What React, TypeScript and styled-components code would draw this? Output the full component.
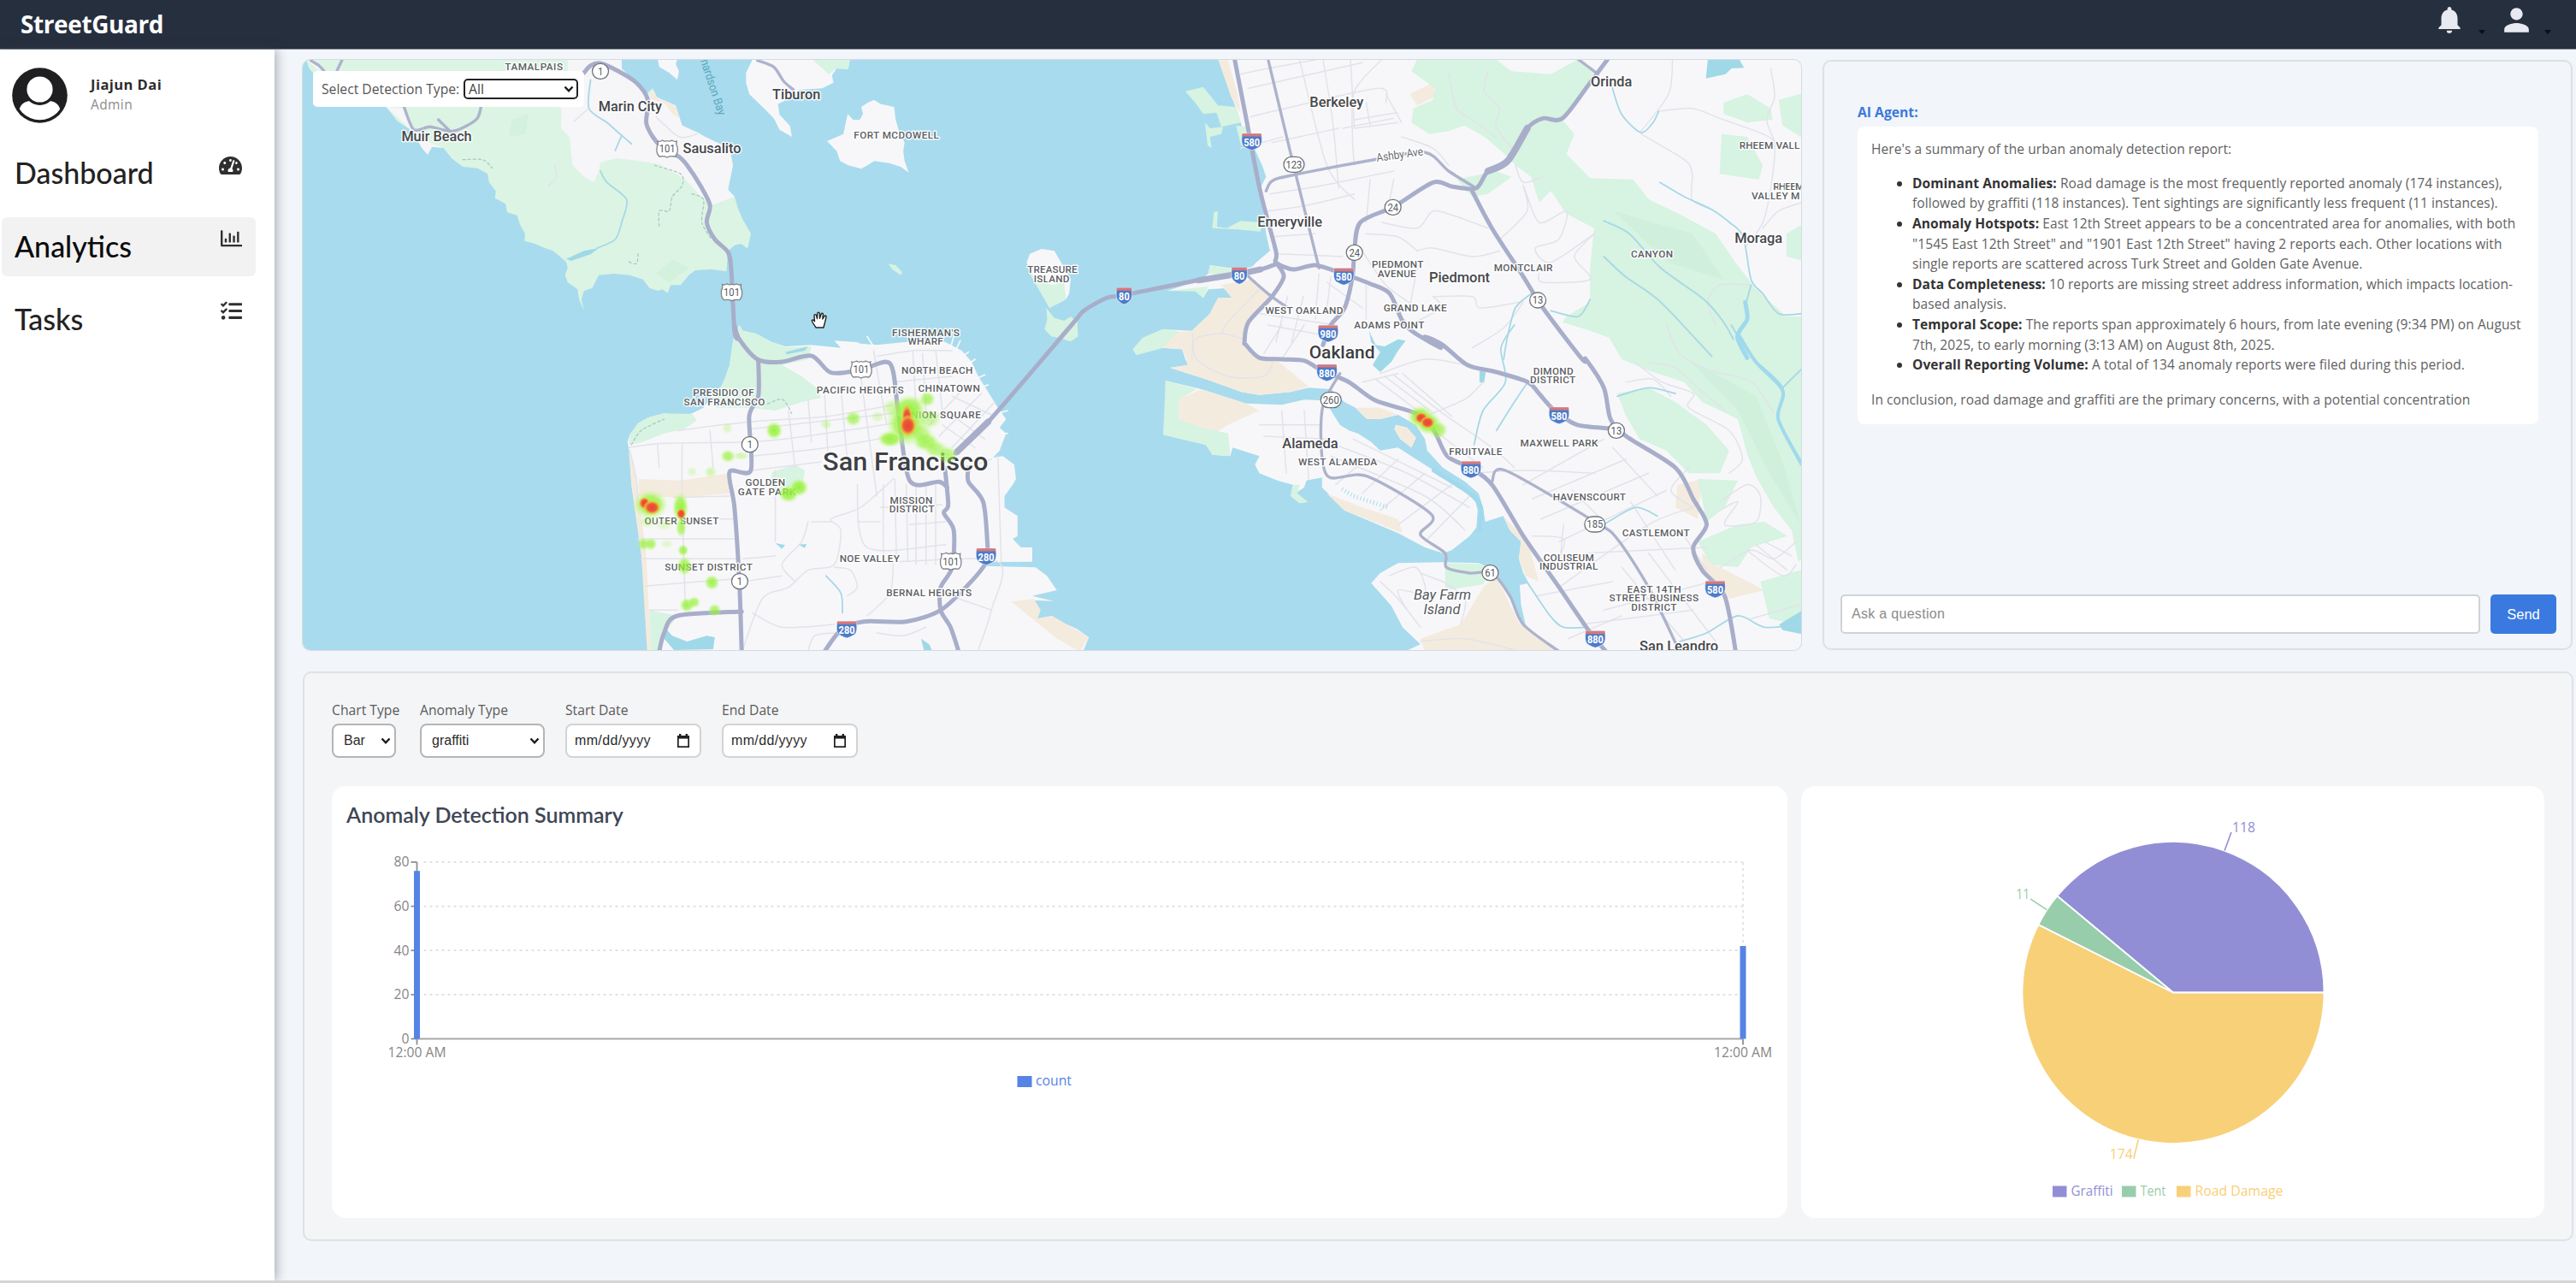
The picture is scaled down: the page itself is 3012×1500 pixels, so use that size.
import React from 'react';
import styled, { createGlobalStyle } from 'styled-components';
import { MdNotifications, MdPerson } from 'react-icons/md';
import { FaTachometerAlt, FaRegChartBar, FaTasks } from 'react-icons/fa';

const UI = `'Open Sans', 'Noto Sans', sans-serif`;

const GlobalStyle = createGlobalStyle`
  * { box-sizing: border-box; }
  body { margin: 0; background: #f2f5f9; font-family: ${UI}; color: #333; }
`;

/* ---------- shell ---------- */

const Page = styled.div`
  width: 3012px;
  height: 1500px;
  display: flex;
  flex-direction: column;
  overflow: hidden;
  border-bottom: 3px solid #d3d5d7;
`;

const Header = styled.header`
  height: 58px;
  flex: none;
  display: flex;
  align-items: flex-start;
  justify-content: space-between;
  padding: 0 29px 0 24px;
  background: #262f3e;
  border-bottom: 1px solid #8b9098;
`;

const Brand = styled.h1`
  margin: 9px 0 0;
  font-size: 28px;
  line-height: 38px;
  font-weight: 700;
  letter-spacing: -0.4px;
  color: #fff;
`;

const HeaderActions = styled.div`
  display: flex;
  align-items: flex-start;
  color: #e9e9f2;
`;

const Caret = styled.span<{ $before: number; $after: number }>`
  width: 0;
  height: 0;
  margin: 35px ${p => p.$after}px 0 ${p => p.$before}px;
  border: 4px solid transparent;
  border-top: 5px solid #0b0e14;
  border-bottom: 0;
`;

const IconBox = styled.span<{ $w: number; $h: number; $top: number }>`
  width: ${p => p.$w}px;
  height: ${p => p.$h}px;
  margin-top: ${p => p.$top}px;
  display: flex;
  align-items: center;
  justify-content: center;
  svg { flex: none; }
`;

const Body = styled.div`
  flex: 1;
  min-height: 0;
  display: flex;
`;

const Sidebar = styled.aside`
  width: 321px;
  flex: none;
  background: #fff;
  box-shadow: 2px 0 12px rgba(60, 64, 80, 0.42);
`;

const Profile = styled.div`
  display: flex;
  align-items: center;
  height: 66px;
  margin-top: 20px;
  padding-left: 14px;
  gap: 27px;
`;

const ProfileText = styled.div`
  display: flex;
  flex-direction: column;
  margin-top: -3px;
`;

const ProfileName = styled.span`
  font-size: 16.5px;
  line-height: 24px;
  font-weight: 700;
  letter-spacing: 0.45px;
  color: #2c2c2c;
`;

const ProfileRole = styled.span`
  font-size: 15.5px;
  line-height: 22px;
  letter-spacing: 0.4px;
  color: #8d8d8d;
`;

const Nav = styled.nav`
  display: flex;
  flex-direction: column;
  gap: 16.5px;
  margin: 24px 22px 0 2px;
`;

const NavItem = styled.a<{ $active?: boolean }>`
  height: 69px;
  display: flex;
  justify-content: space-between;
  padding: 10px 16px 0 15px;
  border-radius: 6px;
  background: ${p => (p.$active ? '#f2f2f2' : 'transparent')};
  color: ${p => (p.$active ? '#0c0c0c' : '#222')};
  font-family: Lato, sans-serif;
  font-size: 34px;
  font-weight: 500;
  line-height: 48px;
  svg { margin-top: 2px; color: #2f2f2f; }
`;

const Main = styled.main`
  flex: 1;
  display: flex;
  flex-direction: column;
  gap: 25px;
  padding: 12px 3px 0 33px;
`;

const TopRow = styled.div`
  height: 690px;
  display: flex;
  gap: 25px;
`;

/* ---------- map ---------- */

const MapCard = styled.section`
  position: relative;
  width: 1752px;
  height: 690px;
  border-radius: 9px;
  overflow: hidden;
  box-shadow: 0 0 0 1px #d5dbe0;
  svg.map { display: block; }
`;

const MapFilter = styled.div`
  position: absolute;
  left: 12px;
  top: 13px;
  width: 317px;
  height: 42px;
  display: flex;
  align-items: center;
  gap: 5px;
  padding-left: 10px;
  background: #fff;
  border-radius: 5px;
  font-size: 15.7px;
  white-space: nowrap;
  color: #555;
`;

const FilterLabel = styled.span`
  width: 161px;
`;

const FilterSelect = styled.div`
  width: 134px;
  height: 24px;
  display: flex;
  align-items: center;
  justify-content: space-between;
  padding: 0 3px 0 4px;
  border: 2px solid #222;
  border-radius: 5px;
  background: #fff;
  color: #444;
`;

/* ---------- assistant ---------- */

const AgentCard = styled.section`
  width: 877px;
  height: 690px;
  display: flex;
  flex-direction: column;
  padding: 45px 17px 17px 19px;
  border: 2px solid #dce1e5;
  border-radius: 10px;
`;

const AgentName = styled.div`
  margin-left: 20px;
  height: 30px;
  font-size: 15.7px;
  line-height: 28px;
  font-weight: 700;
  color: #3b78dc;
`;

const Bubble = styled.div`
  width: 796px;
  height: 348px;
  margin: 1px 0 0 20px;
  padding: 15px 16px;
  background: #fff;
  border-radius: 8px;
  font-size: 15.5px;
  line-height: 23.62px;
  letter-spacing: 0.08px;
  white-space: nowrap;
  color: #626262;
  strong { color: #333; font-weight: 700; }
`;

const Findings = styled.ul`
  margin: 16px 0 17px;
  padding-left: 48px;
  li::marker { color: #333; }
`;

const Paragraph = styled.p`
  margin: 0;
`;

const AskRow = styled.div`
  display: flex;
  gap: 12px;
  margin-top: auto;
`;

const AskInput = styled.input`
  width: 749px;
  height: 46px;
  padding: 0 11px;
  border: 2px solid #cfd3d8;
  border-radius: 5px;
  background: #fff;
  font-family: 'Liberation Sans', Arial, sans-serif;
  font-size: 16px;
  letter-spacing: 0.3px;
  &::placeholder { color: #8c8c8c; opacity: 1; }
`;

const SendButton = styled.button`
  width: 77px;
  height: 46px;
  padding: 0;
  border: 0;
  border-radius: 5px;
  background: #3a7ae0;
  color: #fff;
  font-family: 'Liberation Sans', Arial, sans-serif;
  font-size: 16.5px;
`;

/* ---------- analytics ---------- */

const Analytics = styled.section`
  width: 2655px;
  height: 666px;
  padding: 30px 32px 25px;
  display: flex;
  flex-direction: column;
  border: 2px solid #dee1e5;
  border-radius: 10px;
  background: #f4f5f7;
`;

const Controls = styled.div`
  display: flex;
  height: 69px;
`;

const Field = styled.div<{ $w: number }>`
  width: ${p => p.$w}px;
  display: flex;
  flex-direction: column;
  gap: 3px;
`;

const FieldLabel = styled.label`
  font-size: 15.7px;
  line-height: 26px;
  white-space: nowrap;
  color: #5a5a5a;
`;

const Control = styled.div<{ $w: number; $date?: boolean }>`
  width: ${p => p.$w}px;
  height: 41px;
  display: flex;
  align-items: center;
  justify-content: space-between;
  padding: ${p => (p.$date ? '0 12px 0 9px' : '0 4px 0 12px')};
  border: 2px solid ${p => (p.$date ? '#d3d3d3' : '#b5b5b5')};
  border-radius: 8px;
  background: #fff;
  font-family: 'Liberation Sans', Arial, sans-serif;
  font-size: 16px;
  letter-spacing: ${p => (p.$date ? '0.35px' : '0')};
  color: #2b2b2b;
`;

const Charts = styled.div`
  display: flex;
  gap: 16px;
  margin-top: 33px;
`;

const ChartCard = styled.div<{ $w: number }>`
  width: ${p => p.$w}px;
  height: 505px;
  background: #fff;
  border-radius: 16px;
`;

const ChartTitle = styled.h2`
  margin: 0;
  height: 60px;
  padding: 15px 0 0 17px;
  font-family: Lato, sans-serif;
  font-size: 25px;
  line-height: 36px;
  font-weight: 600;
  color: #3e4654;
`;

/* ---------- small drawings ---------- */

const Chevron = ({ size = 12 }: { size?: number }) => (
  <svg width={size} height={size} viewBox="0 0 12 12" fill="none" stroke="#1c1c1c" strokeWidth="2.4">
    <path d="M1.5 3.5 6 8.3l4.5-4.8" />
  </svg>
);

const CalendarGlyph = () => (
  <svg width="14" height="16" viewBox="0 0 14 16">
    <path d="M0 2h2V0h2.4v2h5.2V0H12v2h2v14H0z" fill="#1f1f1f" />
    <path d="M1.7 5.6h10.6v8.7H1.7z" fill="#fff" />
  </svg>
);

const Avatar = () => (
  <svg width="65" height="65" viewBox="0 0 65 65">
    <defs><clipPath id="face"><circle cx="32.5" cy="32.5" r="28.8" /></clipPath></defs>
    <circle cx="32.5" cy="32.5" r="32.3" fill="#1f1f21" />
    <path clipPath="url(#face)" d="M8 62V52C9 44 14 39 22 39c6 5 15 5 21 0 8 0 13 5 14 13v10z" fill="#fff" />
    <circle cx="32.5" cy="25.5" r="16.8" fill="#fff" stroke="#1f1f21" strokeWidth="3.4" />
  </svg>
);

/* ---------- map data ---------- */

/* Survey sheets: origin and units per pixel of each sheet in page space. */
type Sheet = { x: number; y: number; kx: number };
const sheets: Record<string, Sheet> = {
  A: { x: 350, y: 60, kx: 600 / 1568 },
  B: { x: 900, y: 60, kx: 600 / 1568 },
  C: { x: 1400, y: 60, kx: 720 / 1568 },
  D: { x: 700, y: 380, kx: 600 / 1568 },
  E: { x: 1300, y: 380, kx: 820 / 1568 },
};

const place = (s: string, x: number, y: number): [number, number] => [
  sheets[s].x + x * sheets[s].kx,
  sheets[s].y + y / 3,
];

const points = (src: string): [number, number][] => {
  let sheet = 'A';
  const out: [number, number][] = [];
  src.trim().split(/\s+/).forEach(t => {
    if (sheets[t]) sheet = t;
    else {
      const [x, y] = t.split(',').map(Number);
      out.push(place(sheet, x, y));
    }
  });
  return out;
};

const line = (src: string) =>
  points(src).map(([x, y], i) => `${i ? 'L' : 'M'}${x.toFixed(1)} ${y.toFixed(1)}`).join('');
const area = (src: string) => line(src) + 'Z';

const smooth = (src: string) => {
  const p = points(src);
  let d = `M${p[0][0].toFixed(1)} ${p[0][1].toFixed(1)}`;
  for (let i = 0; i < p.length - 1; i++) {
    const a = p[Math.max(i - 1, 0)], b = p[i], c = p[i + 1], e = p[Math.min(i + 2, p.length - 1)];
    const k = 7;
    d += `C${(b[0] + (c[0] - a[0]) / k).toFixed(1)} ${(b[1] + (c[1] - a[1]) / k).toFixed(1)} ${(c[0] - (e[0] - b[0]) / k).toFixed(1)} ${(c[1] - (e[1] - b[1]) / k).toFixed(1)} ${c[0].toFixed(1)} ${c[1].toFixed(1)}`;
  }
  return d;
};

const marin =
  'A 20,28 30,60 60,100 265,195 300,245 345,280 375,340 392,362 405,335 440,338 465,375 500,405 545,410 575,430 580,460 600,490 598,515 630,535 635,565 665,575 675,610 690,640 688,665 720,675 750,690 775,700 815,738 820,760 812,785 820,810 850,835 855,870 870,910 862,870 870,840 895,830 915,785 960,780 1010,785 1050,800 1070,830 1095,840 1110,835 1125,848 1135,820 1165,820 1190,785 1210,768 1260,765 1305,772 1310,700 1330,680 1350,675 1370,692 1380,640 1355,590 1340,550 1330,510 1310,485 1315,440 1325,400 1315,340 1290,330 1240,300 1220,285 1200,275 1170,260 1155,230 1150,190 1110,170 1090,160 1080,130 1060,150 1020,100 985,60 985,28';

const land = [
  'A 1095,28 1100,55 1130,75 1155,100 1160,70 1150,45 1155,28',
  'A 1385,28 1365,75 1365,110 1375,150 1420,200 1450,235 B 30,275 68,300 62,262 30,222 25,185 60,165 90,135 160,130 195,110 190,85 205,60 240,62 245,28',
  'B 175,315 225,290 238,220 255,240 275,240 285,220 280,195 300,180 318,170 340,185 380,195 385,240 395,280 412,320 408,350 412,385 425,425 400,405 365,392 320,385 280,412 240,400 215,385 205,350',
  'B 785,740 795,710 830,693 870,700 885,730 900,760 920,800 915,850 905,870 855,900 830,850 800,790',
  'D 415,30 410,60 400,140 385,190 370,225 345,250 320,290 285,310 250,318 200,310 150,325 120,345 95,385 88,410 95,450 100,560 110,640 120,720 130,800 140,900 148,1000 155,1145 1480,1145 1498,1095 1460,1065 1420,1045 1385,1020 1340,1030 1350,1000 1320,965 1390,968 1325,950 1400,930 1370,880 1335,850 1180,845 1180,832 1325,830 1325,780 1290,780 1265,750 1280,740 1280,670 1240,640 1240,600 1265,560 1275,540 1270,490 1235,460 1205,465 1225,440 1245,380 1225,360 1245,330 1220,290 1190,235 1160,180 1140,130 1110,90 1060,60 1020,50 850,70 800,65 790,60 720,55 740,80 650,70 570,75 530,60 480,30 440,20 430,0',
  'B 1370,28 1395,80 1405,140 1425,200 1445,270 C 145,340 165,400 175,440 160,480 165,540 172,600 175,640 185,700 150,740 140,755 B 1440,765 1345,750 1340,780 1310,805 1215,840 1300,840 1325,865 1340,835 1400,830 1412,845 1412,865 1370,865 1345,920 1290,980 1200,975 1140,1005 1110,1045 1120,1065 1200,1040 1260,1045 1270,1080 E 170,140 130,150 210,190 290,235 330,245 400,235 440,220 490,225 520,270 545,290 570,330 600,330 640,315 680,350 700,400 705,440 740,500 790,550 820,590 830,640 835,690 875,670 890,720 915,760 910,820 920,870 932,905 912,912 915,980 925,1050 915,1045 905,1000 880,920 850,855 820,835 740,832 640,835 600,870 580,905 625,985 650,1060 690,1120 655,1145 1560,1145 1560,0 C 1560,28',
  'E 120,195 200,225 300,275 380,280 430,262 480,265 490,300 510,350 530,370 550,380 580,410 600,440 640,430 680,470 720,510 770,560 810,600 818,650 815,710 800,740 760,790 740,800 700,780 640,730 580,690 520,650 490,600 470,570 470,535 435,545 430,570 410,590 438,620 420,625 400,600 405,560 370,545 330,520 320,490 330,460 270,430 265,460 225,455 210,420 115,385 120,300',
  'E 635,350 660,360 680,395 670,430 645,400 632,365',
];

const parks = [
  'B 130,28 245,28 240,62 205,60 180,80',
  'B 362,745 385,750 405,775 400,785 375,765',
  'B 795,780 860,820 900,810 905,870 855,900 830,850',
  'B 845,900 870,935 900,945 920,930 940,950 942,1000 920,1018 885,1005 860,1000 840,975 848,940',
  'B 1270,140 1325,125 1370,190 1425,195 1440,250 1380,265 1365,215 1325,220 1300,180',
  'B 1330,250 1345,270 1385,265 1380,290 1345,300 1350,340 1338,330',
  'B 1425,260 1455,265 1470,320 1440,330',
  'C 38,620 42,565 52,560 50,615 75,620 110,595 170,600 160,632 100,625',
  'B 1345,750 1420,765 1400,790 1340,780',
  'B 1215,840 1340,825 1325,865 1300,842',
  'B 1110,1045 1140,1005 1200,975 1250,982 1200,1040 1120,1065',
  'D 415,30 410,60 400,140 385,190 370,225 345,250 360,290 460,290 540,300 620,270 680,255 665,220 620,180 590,160 560,140 640,120 650,75 570,78 530,60 480,30 440,20 430,0',
  'D 95,385 120,345 150,325 200,310 285,312 300,335 260,365 200,380 130,412 92,420',
  'D 520,575 530,515 600,490 630,510 622,570 560,590',
  'D 155,1000 240,1020 210,1070 185,1145 160,1145',
  'C 560,28 640,28 760,28 800,70 900,80 970,28 1010,60 1000,120 930,240 960,290 940,360 1000,445 1110,450 1150,520 1240,580 1320,640 1370,740 1420,830 1500,930 1560,930 1560,1145 E 1560,800 1535,830 1520,720 1480,640 1440,530 1420,450 1400,330 1320,270 1280,200 1200,160 1140,120 1110,40 C 1060,1010 1000,980 930,950 940,930 1000,880 1000,760 1010,620 940,570 900,490 870,530 850,440 810,400 790,370 740,310 720,290 680,260 640,280 590,290 545,250 550,200 600,170 605,130 545,70',
  'C 660,450 760,420 800,440 740,500 700,510',
  'C 1340,180 1400,150 1460,200 1465,240 1400,250 1340,220',
  'C 1335,290 1400,300 1440,400 1430,450 1330,430',
  'C 1480,170 1560,140 1560,320 1490,260',
  'C 1500,640 1560,590 1560,740 1500,720',
  'E 1130,240 1200,220 1260,270 1330,350 1380,440 1360,520 1290,520 1240,440 1180,400 1150,320',
  'E 1310,540 1400,545 1370,640 1330,690',
  'E 1310,760 1400,700 1460,690 1510,740 1430,780 1400,850 1340,840',
  'E 1450,900 1560,850 1560,1060 1470,1030',
  'E 120,195 190,225 150,260 150,330 200,360 260,380 265,460 225,455 210,420 115,385',
  'E 745,835 820,838 850,855 830,910 745,930',
  'E 405,560 420,560 415,590 438,620 420,625 400,600',
];

const sandy = [
  'D 92,440 105,470 122,600 145,800 160,1140 148,1140 130,800 100,560',
  'D 122,540 250,545 400,520 408,590 250,605 122,600',
  'B 1370,28 1400,28 1430,150 1440,220 1410,160',
  'B 1412,865 1370,865 1345,920 1290,980 1240,985 1200,1040 1260,1045 1275,1080 E 165,110 170,140 130,150 210,190 290,235 330,245 400,235 440,215 370,125 320,110 295,60 C 120,1020 130,950 190,860 140,800 60,820',
  'E 150,260 200,225 300,275 330,300 260,350 230,380 150,330',
  'E 860,880 910,1045 1000,1145 700,1145 690,1100 780,1050 830,920',
  'E 1265,560 1320,540 1310,680 1260,640',
  'E 1320,800 1360,850 1460,930 1380,960 1320,860',
  'E 875,670 890,720 915,760 910,820 925,880 955,900 930,760',
  'E 635,350 660,360 680,395 670,430 645,400 632,365',
  'E 545,290 570,330 600,330 640,315 600,290',
  'D 1260,970 1330,960 1350,1000 1340,1030 1385,1020 1498,1095 1470,1145 1400,1100',
  'E 480,590 560,640 640,680 650,730 520,650',
  'C 540,150 600,110 605,160 560,190',
  'A 1080,130 1095,165 1150,190 1160,235 1140,220 1120,185 1070,165',
];

const developed = [
  'A 800,200 800,270 825,300 835,400 870,440 900,460 915,420 920,390 970,375 1040,385 1100,395 1180,450 1220,500 1260,540 1330,510 1310,485 1325,400 1315,340 1240,300 1170,260 1150,190 1090,160 1060,150 985,60 985,28 820,28 820,120 790,195',
  'A 265,195 320,200 350,275 400,320 440,338 405,335 392,362 375,340 345,280',
  'A 60,68 20,28 45,28 80,68',
];

const ponds = [
  'D 205,1065 225,1090 270,1110 330,1090 355,1095 350,1137 230,1140 200,1100',
  'D 985,1100 1010,1120 1020,1145 995,1145',
  'D 540,765 570,772 560,785',
  'D 610,770 635,768 630,782',
  'E 575,20 580,60 600,95 583,140 600,165 625,130 640,90 657,55 640,50 610,75 590,70',
  'E 822,160 836,165 832,205 822,200',
  'C 1300,28 1380,28 1392,58 1360,60 1345,80 1295,95',
  'E 1492,1050 1545,1000 1545,1085 1500,1070',
  'D 570,95 640,75 630,90 575,103',
  'A 815,728 870,700 915,690 890,712 830,735',
];

const creeks = [
  'A 890,100 885,200 940,250 985,295 1015,325',
  'A 985,295 965,348',
  'A 920,420 940,460 1000,520 985,600 965,660 910,690',
  'C 1055,120 1080,220 1130,285 1160,250 1175,210',
  'C 1178,460 1240,510 1310,555 1355,600 1390,650 1410,800 1440,850 1480,920 1540,920',
  'C 1035,595 1100,640 1180,760 1290,870 1340,950 1365,1010',
  'C 1035,720 1090,790 1180,880 1310,1070',
  'C 1410,820 1395,900 1400,940 1375,1010 1400,1075',
  'C 850,850 810,900 790,1000 780,1080',
  'C 900,910 970,930 1000,870',
  'E 1385,0 1430,110 1500,220 1490,330 1540,490',
  'E 1500,220 1545,150',
  'E 900,0 870,80 880,200 830,300 810,420',
  'E 930,200 900,270 860,370',
  'E 720,510 800,590 825,640 822,700',
  'E 1130,250 1200,220 1260,240',
  'E 930,905 980,1020 1010,1060 1060,1060',
  'E 1270,1110 1330,1080 1400,1020 1460,1060 1545,1050',
  'E 1100,700 1170,640 1220,670',
  'D 695,880 740,940 745,1010',
];

const highways = [
  'D 415,0 430,50 485,120 555,130 650,108 710,167 800,158 890,135 915,300 950,545 1040,550 1065,570',
  'D 488,125 488,250 460,320 465,510 400,515 415,640 430,900 437,1145',
  'D 437,1005 240,1020 200,1080 185,1145',
  'D 1058,500 1068,630 1055,660 1085,720 1080,850 1045,920 1045,1000 1075,1060 1100,1145',
  'D 690,1145 740,1070 810,1040 940,1040 1045,1000 1130,910 1185,830 1188,770 1175,620 1130,550 1130,500',
  'D 1090,450 1190,340 1445,0 B 960,910 1030,865 1083,855 1320,800 1435,780 1500,765 1550,745',
  'C 95,28 125,240 160,490 200,700 200,740 245,765 300,750 370,780 440,815 490,850 520,940 550,985 620,1040 E 700,40 740,70 795,140 860,165 930,200 955,240 990,300 1040,350 1110,362',
  'C 200,740 220,790 190,860 130,950 120,1020 E 300,70 330,115 380,120 430,125 470,160 530,200 590,265 680,310 720,370 750,460 800,500 850,560 920,740 1000,920 1070,1080 1105,1145',
  'C 700,490 750,620 830,790 880,900 980,1080 E 1060,120 1100,220 1115,330 1150,390 1260,500 1300,610 1330,700 1300,780 1320,860 1370,950 1395,1145',
  'C 320,1030 340,960 375,900 395,790 400,700 415,600 500,545 600,460 650,475 710,480 740,420 790,385 840,270 880,235 930,235 1000,110 1045,28',
  'A 870,75 890,50 920,42 975,70 1030,110 1065,170 1060,250 1080,300 1115,345 1160,370 1185,400 1225,470 1255,540 1245,600 1270,660 1310,705 1320,770 1330,985 D 430,50',
];

const arterials = [
  'C 175,490 190,455 240,435 450,380 580,355 640,420 710,480',
  'C 180,28 245,400 310,760',
  'C 970,28 1020,80',
  'C 130,790 180,850 230,900',
  'E 510,170 470,300 480,525 570,530 715,665 690,735 745,800 748,850 800,870 850,870 890,950 920,1050 1000,1145',
  'E 850,550 880,510 1080,690 1130,750 1200,920 1265,1130',
  'A 320,195 350,275 400,265 470,280 540,240 555,195',
  'A 425,240 460,280',
  'A 35,32 60,50 75,68',
  'A 130,32 115,68',
  'A 1400,32 1450,55 1480,105 1510,135',
];

const streets = [
  'D 92,430 200,415 460,410 600,395 900,345',
  'D 95,440 115,540 120,620',
  'D 230,605 400,600',
  'D 250,680 410,680', 'D 120,750 415,750', 'D 130,820 430,820', 'D 145,915 420,890', 'D 155,1000 240,1000',
  'D 255,420 255,600 265,1000', 'D 180,420 185,500', 'D 340,370 350,500',
  'D 240,370 460,340 700,320 900,280', 'D 460,365 900,310', 'D 470,460 700,430 900,390', 'D 470,510 680,480',
  'D 690,230 700,440', 'D 740,220 760,480', 'D 800,170 850,600', 'D 840,90 880,350', 'D 640,260 650,410',
  'D 580,300 600,500', 'D 540,510 540,760',
  'D 850,110 960,90 1080,90', 'D 900,200 1080,180', 'D 990,100 1000,300', 'D 1030,90 1050,300', 'D 960,90 970,300',
  'D 1080,250 1210,320', 'D 1060,300 1180,400', 'D 1050,350 1150,430', 'D 1210,270 1080,430', 'D 1170,240 1040,390', 'D 1110,230 1010,350',
  'D 870,560 870,790 880,830', 'D 905,540 910,830', 'D 940,560 945,830', 'D 970,560 970,840', 'D 1000,560 1000,840', 'D 1030,560 1030,840',
  'D 790,560 820,780 1060,770', 'D 900,540 800,640 710,680 740,720 720,840 640,860 580,920 500,960 440,1140',
  'D 720,850 770,860 790,920 760,950', 'D 640,690 620,760 560,840 600,900', 'D 650,690 710,690',
  'D 920,830 1220,830 1200,1000 1160,1140', 'D 900,830 890,940 820,1020', 'D 470,1010 560,1060 720,1050',
  'D 1100,960 1200,1000', 'D 1220,460 1230,830', 'D 1130,500 1200,470', 'D 950,700 1060,690', 'D 860,640 1050,630', 'D 790,690 860,690',
  'D 850,1080 930,1090 1000,1060', 'D 640,1140 660,1090 720,1080', 'D 440,820 540,810', 'D 440,900 560,880',
  'C 260,28 330,400 400,520', 'C 320,28 345,250 360,480', 'C 390,28 400,270', 'C 470,28 400,140 395,300 400,400',
  'C 110,80 180,60 300,30', 'C 130,130 420,40', 'C 135,230 210,205 460,130 480,180', 'C 370,270 500,235', 'C 400,240 510,215',
  'C 400,270 510,250', 'C 430,180 440,260', 'C 480,150 520,250', 'C 190,320 360,270', 'C 250,430 420,390',
  'C 185,500 320,470 500,420', 'C 180,560 280,540 400,500', 'C 190,650 300,640', 'C 200,710 370,720', 'C 440,450 430,600',
  'C 430,640 510,650 560,700', 'C 470,600 560,620 600,560 660,580 740,620', 'C 560,700 600,690 700,720 770,700',
  'C 420,700 480,820 560,900', 'C 600,860 700,860 720,900 820,880', 'C 540,960 620,900 600,860', 'C 700,1040 780,970 830,880',
  'C 230,860 200,1020', 'C 270,860 240,1020', 'C 310,780 300,940', 'C 340,790 330,900', 'C 180,960 340,1000', 'C 160,920 350,960',
  'C 330,810 420,900', 'C 430,820 430,940', 'C 560,760 540,900', 'C 770,660 840,560 830,470 870,600 940,560 920,660 860,690 900,740 1010,640',
  'C 1010,640 960,720 1000,800 880,810 870,780', 'C 1210,28 1200,150 1130,280', 'C 1180,210 1260,200 1340,240 1440,290 1470,330 1460,480 1440,600 1400,680',
  'C 1460,60 1470,160 1450,240 1475,330', 'C 1130,290 1240,380 1260,430 1260,520 1310,555', 'C 1540,530 1480,560 1440,620',
  'C 1410,820 1330,820 1300,880 1320,960', 'C 740,70 730,140 770,200 760,260 800,340', 'C 640,80 660,200 700,240 760,300',
  'C 500,450 490,520', 'C 520,300 600,340 640,400', 'C 810,400 830,460 880,440', 'B 1440,340 1568,300', 'B 1380,990 1400,950 1500,830',
  'B 1290,1080 1300,1010 1380,990 1450,1010',
  'E 590,190 700,320', 'E 610,180 720,310', 'E 630,175 740,310', 'E 650,170 760,320', 'E 600,170 700,120 790,140', 'E 560,200 640,170',
  'E 700,320 790,260 830,200', 'E 740,310 850,430 900,500', 'E 730,380 830,500', 'E 800,520 930,510 1080,520', 'E 920,560 1100,400',
  'E 940,610 1150,470', 'E 960,680 1200,520', 'E 1000,760 1240,580', 'E 1000,920 1200,700 1300,640', 'E 1010,700 1000,860', 'E 940,740 1010,750 1000,820',
  'E 1030,580 1100,690', 'E 1120,430 1220,600', 'E 1160,620 1260,860', 'E 1060,800 1330,780', 'E 1100,1000 1340,900', 'E 1050,1050 1300,1000',
  'E 1140,850 1280,1110', 'E 1200,800 1350,1110', 'E 950,950 1120,900', 'E 1020,1100 1140,1020', 'E 1280,740 1330,860',
  'E 330,350 470,350', 'E 340,390 480,400', 'E 380,300 390,520', 'E 430,300 440,540', 'E 490,460 700,600 790,720', 'E 500,420 660,520 800,640',
  'E 540,400 760,570', 'E 600,650 700,520', 'E 640,700 760,560', 'E 700,760 800,600', 'E 560,590 640,470', 'E 500,560 560,480',
  'E 620,880 680,850 700,940 640,930 660,1000', 'E 600,900 640,960 690,1060', 'E 690,870 740,900', 'E 690,1110 790,1100 900,1140',
  'E 740,900 790,960 780,1050', 'E 180,30 190,120 260,180 340,180 360,130', 'E 380,0 340,100', 'E 430,0 380,120',
  'E 1170,130 1230,200 1300,240 1290,290 1380,370 1410,470 1380,520', 'E 1200,130 1260,150 1310,220 1370,300', 'E 1150,200 1210,190 1250,250',
  'E 1360,620 1420,560 1450,600 1440,690 1370,700 1400,620 1360,650', 'E 1360,850 1430,790 1480,820 1530,760', 'E 1420,790 1500,880 1530,840',
  'E 1440,770 1510,860', 'E 1460,760 1520,810', 'E 1290,500 1250,580 1300,640', 'E 1240,0 1270,100 1340,160 1430,200 1480,310', 'E 1430,1030 1540,980',
  'A 1090,230 1160,300 1215,290', 'A 780,400 785,440 760,475', 'A 880,205 840,245',
];

const trails = [
  'A 1085,400 1165,430 1170,470 1140,510 1130,560 1100,560 1100,620',
  'A 1200,500 1235,520 1230,600 1260,660',
  'A 500,380 560,380 590,410', 'A 1035,710 1030,745 1000,735',
  'D 490,230 500,280 560,260 590,310', 'D 100,420 130,370 200,330',
];

type Label = [string, number, number, number, string, ('town' | 'hood' | 'city' | 'metro' | 'isle')?];
const labels: Label[] = [
  ['A', 628, 805, 67, 'TAMALPAIS'],
  ['A', 312, 527, 314, 'Muir Beach', 'town'],
  ['A', 914, 1108, 211, 'Marin City', 'town'],
  ['A', 1172, 1350, 357, 'Sausalito', 'town'],
  ['B', 8, 155, 169, 'Tiburon', 'town'],
  ['B', 257, 517, 306, 'FORT MCDOWELL'],
  ['B', 787, 940, 777, 'TREASURE'],
  ['B', 807, 916, 809, 'ISLAND'],
  ['B', 374, 580, 998, "FISHERMAN'S"],
  ['B', 422, 530, 1029, 'WHARF'],
  ['C', 286, 423, 195, 'Berkeley', 'town'],
  ['C', 1002, 1107, 123, 'Orinda', 'town'],
  ['C', 153, 318, 614, 'Emeryville', 'town'],
  ['C', 590, 745, 811, 'Piedmont', 'town'],
  ['C', 1368, 1490, 673, 'Moraga', 'town'],
  ['C', 1380, 1534, 341, 'RHEEM VALL'],
  ['C', 1466, 1545, 486, 'RHEEM'],
  ['C', 1411, 1534, 519, 'VALLEY M'],
  ['C', 1104, 1211, 724, 'CANYON'],
  ['C', 755, 905, 770, 'MONTCLAIR'],
  ['C', 444, 576, 760, 'PIEDMONT'],
  ['C', 459, 557, 791, 'AVENUE'],
  ['C', 173, 371, 922, 'WEST OAKLAND'],
  ['C', 474, 635, 912, 'GRAND LAKE'],
  ['C', 399, 578, 972, 'ADAMS POINT'],
  ['E', 441, 588, 118, 'Oakland', 'city'],
  ['D', 925, 1143, 171, 'NORTH BEACH'],
  ['D', 666, 932, 239, 'PACIFIC HEIGHTS'],
  ['D', 976, 1165, 235, 'CHINATOWN'],
  ['D', 288, 475, 250, 'PRESIDIO OF'],
  ['D', 260, 508, 282, 'SAN FRANCISCO'],
  ['D', 932, 1168, 328, 'UNION SQUARE'],
  ['D', 685, 1190, 511, 'San Francisco', 'metro'],
  ['D', 448, 570, 565, 'GOLDEN'],
  ['D', 425, 602, 597, 'GATE PARK'],
  ['D', 140, 367, 700, 'OUTER SUNSET'],
  ['D', 890, 1020, 626, 'MISSION'],
  ['D', 888, 1026, 658, 'DISTRICT'],
  ['D', 736, 920, 832, 'NOE VALLEY'],
  ['D', 202, 470, 860, 'SUNSET DISTRICT'],
  ['D', 879, 1140, 952, 'BERNAL HEIGHTS'],
  ['E', 942, 1032, 173, 'DIMOND'],
  ['E', 935, 1037, 204, 'DISTRICT'],
  ['E', 913, 1087, 427, 'MAXWELL PARK'],
  ['E', 754, 873, 455, 'FRUITVALE'],
  ['E', 381, 506, 432, 'Alameda', 'town'],
  ['E', 417, 593, 491, 'WEST ALAMEDA'],
  ['E', 986, 1149, 615, 'HAVENSCOURT'],
  ['E', 1141, 1292, 742, 'CASTLEMONT'],
  ['E', 965, 1078, 828, 'COLISEUM'],
  ['E', 956, 1087, 859, 'INDUSTRIAL'],
  ['E', 1152, 1273, 938, 'EAST 14TH'],
  ['E', 1112, 1312, 969, 'STREET BUSINESS'],
  ['E', 1161, 1263, 1001, 'DISTRICT'],
  ['E', 675, 803, 963, 'Bay Farm', 'isle'],
  ['E', 697, 779, 1014, 'Island', 'isle'],
  ['E', 1180, 1356, 1142, 'San Leandro', 'town'],
];

const labelStyle = {
  hood: { fontSize: 11.8, fontWeight: 500, fill: '#5c5e63' },
  town: { fontSize: 16.5, fontWeight: 500, fill: '#45474b' },
  city: { fontSize: 21, fontWeight: 500, fill: '#3c3e42' },
  metro: { fontSize: 30, fontWeight: 500, fill: '#3e4044' },
  isle: { fontSize: 17, fontWeight: 400, fill: '#55575b', fontStyle: 'italic' as const },
};

type Shield = [string, number, number, string, 'i' | 'us' | 'st'];
const shields: Shield[] = [
  ['A', 920, 70, '1', 'st'], ['A', 1124, 342, '101', 'us'], ['A', 1321, 845, '101', 'us'],
  ['B', 1473, 317, '580', 'i'], ['B', 1083, 858, '80', 'i'], ['B', 1435, 787, '80', 'i'],
  ['C', 246, 397, '123', 'st'], ['C', 498, 547, '24', 'st'], ['C', 400, 706, '24', 'st'],
  ['C', 373, 790, '580', 'i'], ['C', 333, 990, '980', 'i'], ['C', 867, 873, '13', 'st'],
  ['D', 802, 156, '101', 'us'], ['D', 462, 419, '1', 'st'], ['D', 431, 899, '1', 'st'],
  ['D', 1076, 829, '101', 'us'], ['D', 1184, 812, '280', 'i'], ['D', 758, 1068, '280', 'i'],
  ['E', 481, 167, '880', 'i'], ['E', 490, 263, '260', 'st'], ['E', 1000, 317, '580', 'i'],
  ['E', 1128, 370, '13', 'st'], ['E', 803, 507, '880', 'i'], ['E', 1080, 699, '185', 'st'],
  ['E', 846, 869, '61', 'st'], ['E', 1349, 927, '580', 'i'], ['E', 1081, 1102, '880', 'i'],
];

/* sheet, x, y, rx, ry, heat 0 faint – 1 full */
const heat: [string, number, number, number, number, number][] = [
  ['D', 940, 345, 58, 76, 1], ['D', 950, 290, 48, 42, 0.9], ['D', 890, 400, 36, 28, 1], ['D', 1004, 260, 24, 26, 0.8],
  ['D', 1000, 410, 38, 32, 0.9], ['D', 1030, 435, 34, 30, 0.7], ['D', 1065, 455, 30, 30, 0.7], ['D', 900, 290, 34, 32, 0.4],
  ['D', 1010, 330, 36, 34, 0.5], ['D', 985, 380, 34, 34, 0.6],
  ['D', 778, 328, 24, 26, 0.8], ['D', 852, 322, 20, 20, 0.3], ['D', 695, 348, 18, 18, 0.35], ['D', 536, 370, 25, 30, 1],
  ['D', 393, 362, 16, 20, 0.3], ['D', 395, 460, 22, 22, 0.8], ['D', 435, 459, 24, 14, 0.4], ['D', 285, 515, 16, 18, 0.25],
  ['D', 342, 515, 18, 20, 0.4], ['D', 580, 592, 30, 30, 1], ['D', 612, 570, 28, 30, 1], ['D', 158, 630, 50, 48, 1],
  ['D', 250, 640, 24, 50, 1], ['D', 252, 710, 16, 34, 0.8], ['D', 150, 690, 26, 22, 0.3], ['D', 200, 700, 28, 22, 0.25],
  ['D', 138, 768, 20, 22, 0.8], ['D', 160, 768, 18, 22, 0.8], ['D', 208, 768, 20, 16, 0.25], ['D', 258, 790, 16, 20, 0.9],
  ['D', 262, 845, 22, 32, 0.9], ['D', 346, 903, 22, 26, 0.9], ['D', 430, 899, 26, 26, 0.4], ['D', 270, 982, 22, 24, 0.9],
  ['D', 292, 972, 18, 20, 0.8], ['D', 354, 1000, 20, 22, 0.8],
  ['E', 690, 322, 27, 38, 1], ['E', 708, 345, 27, 38, 1], ['E', 730, 368, 20, 30, 0.8],
];
const embers: [string, number, number, number, number][] = [
  ['D', 942, 325, 15, 42], ['D', 945, 353, 24, 34], ['D', 140, 625, 16, 20], ['D', 163, 640, 24, 23], ['D', 252, 662, 13, 18],
  ['E', 692, 326, 14, 19], ['E', 706, 342, 15, 20],
];

const RoadShield = ({ s, x, y, n, kind }: { s: string; x: number; y: number; n: string; kind: string }) => {
  const [px, py] = place(s, x, y);
  const w = n.length > 2 ? 12 : 9.5;
  return (
    <g transform={`translate(${px} ${py})`} fontFamily="Roboto, sans-serif" textAnchor="middle">
      {kind === 'st' && <rect x={-w} y={-9} width={w * 2} height={18} rx={9} fill="#fff" stroke="#70757a" strokeWidth="1.3" />}
      {kind === 'us' && (
        <path d="M-11-9Q-8-8-5.500-10Q-3-8 0-9.500Q3-8 5.500-10Q8-8 11-9Q10-5 12-2Q13 6 9 9Q4 8 0 10Q-4 8-9 9Q-13 6-12-2Q-10-5-11-9Z" fill="#fff" stroke="#80838b" strokeWidth="1.3" />
      )}
      {kind === 'i' && (
        <>
          <path d={`M${-w + 1}-9.500H${w - 1}Q${w + 1.500} 2 ${w - 3} 6Q3 9.500 0 10Q-3 9.500 ${-w + 3} 6Q${-w - 1.500} 2 ${-w + 1}-9.500Z`} fill="#4c7cc9" stroke="#fff" strokeWidth="0.6" />
          <path d={`M${-w + 1}-9.500H${w - 1}L${w - 0.5}-6.200H${-w + 0.5}Z`} fill="#d8787b" />
        </>
      )}
      <text y={kind === 'i' ? 5 : 4.2} fontSize={12} fontWeight={kind === 'i' ? 700 : 400} fill={kind === 'i' ? '#fff' : '#55585e'}
        textLength={n.length * 6.3} lengthAdjust="spacingAndGlyphs">{n}</text>
    </g>
  );
};

const BayMap = () => (
  <svg className="map" width="1752" height="690" viewBox="354 70 1752 690">
    <defs>
      <radialGradient id="glow">
        <stop offset="0" stopColor="#8fef35" stopOpacity="0.92" />
        <stop offset="0.55" stopColor="#9cf33f" stopOpacity="0.75" />
        <stop offset="0.8" stopColor="#b9f873" stopOpacity="0.35" />
        <stop offset="1" stopColor="#c9fb8c" stopOpacity="0" />
      </radialGradient>
      <radialGradient id="ember">
        <stop offset="0" stopColor="#ea4335" />
        <stop offset="0.5" stopColor="#ec5a36" />
        <stop offset="0.75" stopColor="#f0b040" stopOpacity="0.85" />
        <stop offset="1" stopColor="#d8ee3c" stopOpacity="0" />
      </radialGradient>
    </defs>
    <rect x="354" y="70" width="1752" height="690" fill="#a8dbed" />
    <path d={area(marin)} fill="#dcf4e4" />
    {developed.map(d => <path key={d} d={area(d)} fill="#f6f5f8" />)}
    {land.map(d => <path key={d} d={area(d)} fill="#f7f7fa" />)}
    {sandy.map(d => <path key={d} d={area(d)} fill="#f4ebdf" />)}
    {parks.map(d => <path key={d} d={area(d)} fill="#d7f3e1" />)}
    <g fill="#cdeed9" opacity="0.6">
      <path d={area('A 650,240 700,220 690,290 640,300')} />
      <path d={area('A 1090,780 1140,730 1190,760 1130,810')} />
      <path d={area('C 1060,560 1260,640 1340,800 1200,740')} />
      <path d={area('E 1290,120 1440,250 1500,480 1540,700 1470,520 1400,300')} />
    </g>
    {ponds.map(d => <path key={d} d={area(d)} fill="#9fd9e8" />)}
    <g fill="none" strokeLinejoin="round" strokeLinecap="round">
      <g stroke="#e2e3ea" strokeWidth="1.5">{streets.map(d => <path key={d} d={smooth(d)} />)}</g>
      <g stroke="#a6d8e6" strokeWidth="1.8">{creeks.map(d => <path key={d} d={smooth(d)} />)}</g>
      <path d={smooth('C 1395,880 1400,940 1375,1000 1400,1075')} stroke="#9fd9ee" strokeWidth="5" />
      <path d={smooth('E 1400,30 1440,130 1500,230 1490,330 1540,480')} stroke="#9fd9ee" strokeWidth="4" />
      <path d={smooth('E 720,510 800,590 825,640 822,720')} stroke="#a0d9ec" strokeWidth="5" />
      <g stroke="#a9c4bd" strokeWidth="1.2" strokeDasharray="3 3">{trails.map(d => <path key={d} d={smooth(d)} />)}</g>
      <path d={line('E 515,575 540,600 580,620 620,640')} stroke="#a8dbed" strokeWidth="5" strokeDasharray="1 3" strokeLinecap="butt" />
      <g stroke="#fafafc" strokeWidth="1.6">
        <path d={line('D 820,40 840,75')} /><path d={line('D 1085,40 1075,80')} /><path d={line('D 1105,55 1090,90')} />
        <path d={line('D 1130,95 1105,115')} /><path d={line('D 1150,120 1120,145')} /><path d={line('D 1180,175 1150,190')} />
        <path d={line('D 1190,210 1165,220')} /><path d={line('D 1250,300 1220,310')} /><path d={line('D 1250,380 1220,380')} />
      </g>
      <g stroke="#aeb3cc" strokeWidth="3.4">{arterials.map(d => <path key={d} d={smooth(d)} />)}</g>
      <g stroke="#a8aeca" strokeWidth="5">{highways.map(d => <path key={d} d={smooth(d)} />)}</g>
      <path d={smooth('C 740,420 790,385 840,270')} stroke="#a8aeca" strokeWidth="8" />
      <path d={line('D 1095,445 1190,340')} stroke="#a8aeca" strokeWidth="7.5" />
      <path d={smooth('B 1310,803 1435,780 1500,765')} stroke="#a8aeca" strokeWidth="7" />
    </g>
    {labels.map(([s, x1, x2, y, text, kind = 'hood'], i) => {
      const [px, py] = place(s, x1, y);
      return (
        <text key={i} x={px} y={py} textLength={(x2 - x1) * sheets[s].kx} lengthAdjust={kind === 'hood' ? 'spacing' : 'spacingAndGlyphs'}
          fontFamily="Roboto, sans-serif" stroke="#fff" strokeWidth="3" strokeOpacity="0.85" strokeLinejoin="round" paintOrder="stroke" {...labelStyle[kind]}>
          {text}
        </text>
      );
    })}
    <text fontFamily="Roboto, sans-serif" fontSize="13.5" fill="#6a6d73" transform="translate(1610 189) rotate(-8)" textLength="55" lengthAdjust="spacingAndGlyphs" stroke="#fff" strokeWidth="3" paintOrder="stroke">Ashby Ave</text>
    <text fontFamily="Roboto, sans-serif" fontSize="14" fill="#5aa9bd" transform="translate(819 71) rotate(72)" textLength="68" lengthAdjust="spacingAndGlyphs">nardson Bay</text>
    {heat.map(([s, x, y, rx, ry, o], i) => {
      const [px, py] = place(s, x, y);
      return <ellipse key={i} cx={px} cy={py} rx={rx * sheets[s].kx * 1.1} ry={(ry / 3) * 1.1} fill="url(#glow)" opacity={o} />;
    })}
    {embers.map(([s, x, y, rx, ry], i) => {
      const [px, py] = place(s, x, y);
      return <ellipse key={i} cx={px} cy={py} rx={rx * sheets[s].kx * 1.15} ry={(ry / 3) * 1.15} fill="url(#ember)" />;
    })}
    {shields.map(([s, x, y, n, kind], i) => <RoadShield key={i} s={s} x={x} y={y} n={n} kind={kind} />)}
    <path transform="translate(948.500 364)" fill="#fff" stroke="#222" strokeWidth="1.4" strokeLinejoin="round"
      d="M5.500 19C4 16 1 13 .8 11c0-1.500 2-1.500 3.200.8L3.500 5c0-1.800 2.200-1.800 2.600 0L7 8.500 7.300 2.500c.1-1.800 2.300-1.800 2.500 0L10 8.200l1.600-5c.5-1.600 2.500-1.200 2.300.5L13.300 9l2-3.200c.9-1.400 2.600-.5 2.200 1L16 13l-1.600 6z" />
  </svg>
);

/* ---------- charts ---------- */

const BarChart = () => {
  const base = 235.5;
  const y = (v: number) => base - v * 2.5825;
  const x0 = 99.5, x1 = 1650;
  return (
    <svg width="1702" height="360" viewBox="0 0 1702 360" display="block" fontFamily="'Open Sans', sans-serif" fontSize="15.5">
      {[20, 40, 60, 80].map(v => (
        <line key={v} x1={x0 + 8} x2={x1} y1={y(v)} y2={y(v)} stroke="#dedede" strokeWidth="1.8" strokeDasharray="3 4" />
      ))}
      <line x1={x1} x2={x1} y1={y(80)} y2={base} stroke="#e2e2e2" strokeWidth="1.8" strokeDasharray="3 4" />
      <g stroke="#8f8f8f" strokeWidth="1.8">
        <line x1={x0} x2={x0} y1={y(80)} y2={base + 7} />
        <line x1={x0} x2={x1} y1={base} y2={base} stroke="#a8a8a8" strokeWidth="2" />
        <line x1={x1} x2={x1} y1={base} y2={base + 7} />
        {[0, 20, 40, 60, 80].map(v => <line key={v} x1={x0 - 7} x2={x0} y1={y(v)} y2={y(v)} />)}
      </g>
      {[0, 20, 40, 60, 80].map(v => (
        <text key={v} x={x0 - 9} y={y(v) + 5.5} textAnchor="end" fill="#868686" textLength={v ? 18 : 9} lengthAdjust="spacingAndGlyphs">{v}</text>
      ))}
      <rect x={x0 - 3.5} y={y(76)} width="7" height={base - y(76)} fill="#5583e6" />
      <rect x={x1 - 3.5} y={y(42)} width="7" height={base - y(42)} fill="#5583e6" />
      {[x0, x1].map(x => (
        <text key={x} x={x} y={base + 21.5} textAnchor="middle" fill="#868686" textLength="68" lengthAdjust="spacingAndGlyphs">12:00 AM</text>
      ))}
      <rect x="801.500" y={base + 43.5} width="17" height="13" fill="#5583e6" />
      <text x="823" y={base + 54} fill="#5583e6" textLength="42" lengthAdjust="spacingAndGlyphs">count</text>
    </svg>
  );
};

const PIE = [
  { name: 'Graffiti', value: 118, color: '#928ed5' },
  { name: 'Tent', value: 11, color: '#98cdab' },
  { name: 'Road Damage', value: 174, color: '#f8d078' },
];

const PieChart = () => {
  const cx = 435, cy = 241.5, r = 176.5;
  const total = PIE.reduce((a, s) => a + s.value, 0);
  const at = (deg: number, rad: number) => [cx + rad * Math.cos((deg * Math.PI) / 180), cy - rad * Math.sin((deg * Math.PI) / 180)];
  let start = 0;
  const legendX = [294, 375, 439];
  const legendW = [49, 30, 103];
  return (
    <svg width="869" height="505" viewBox="0 0 869 505" display="block" fontFamily="'Open Sans', sans-serif" fontSize="15.5">
      {PIE.map((s, i) => {
        const end = start + (s.value / total) * 360;
        const [ax, ay] = at(start, r), [bx, by] = at(end, r);
        const mid = (start + end) / 2;
        const [mx, my] = at(mid, r), [nx, ny] = at(mid, r + 23);
        const large = end - start > 180 ? 1 : 0;
        const w = s.value > 99 ? 27 : 16;
        start = end;
        return (
          <g key={s.name}>
            <path d={`M${cx} ${cy}L${ax} ${ay}A${r} ${r} 0 ${large} 0 ${bx} ${by}Z`} fill={s.color} stroke="#fff" strokeWidth="1.8" />
            <line x1={mx} y1={my} x2={nx} y2={ny} stroke={s.color} strokeWidth="1.6" />
            <text x={nx > cx ? nx + 1 : nx - 1} y={ny} textAnchor={nx > cx ? 'start' : 'end'} fill={s.color} textLength={w} lengthAdjust="spacingAndGlyphs">{s.value}</text>
            <rect x={legendX[i]} y="467.500" width="16.500" height="13" fill={s.color} />
            <text x={legendX[i] + 21.5} y="478.500" fill={s.color} textLength={legendW[i]} lengthAdjust="spacingAndGlyphs">{s.name}</text>
          </g>
        );
      })}
    </svg>
  );
};

/* ---------- app ---------- */

export default function App() {
  return (
    <>
      <GlobalStyle />
      <Page>
        <Header>
          <Brand>StreetGuard</Brand>
          <HeaderActions>
            <IconBox $w={26} $h={32} $top={7}><MdNotifications size={38} /></IconBox>
            <Caret $before={21} $after={22} />
            <IconBox $w={29} $h={29} $top={9}><MdPerson size={43} /></IconBox>
            <Caret $before={18} $after={0} />
          </HeaderActions>
        </Header>
        <Body>
          <Sidebar>
            <Profile>
              <Avatar />
              <ProfileText>
                <ProfileName>Jiajun Dai</ProfileName>
                <ProfileRole>Admin</ProfileRole>
              </ProfileText>
            </Profile>
            <Nav>
              <NavItem>Dashboard<FaTachometerAlt size={27} /></NavItem>
              <NavItem $active>Analytics<FaRegChartBar size={25.5} /></NavItem>
              <NavItem>Tasks<FaTasks size={25} /></NavItem>
            </Nav>
          </Sidebar>
          <Main>
            <TopRow>
              <MapCard>
                <BayMap />
                <MapFilter>
                  <FilterLabel>Select Detection Type:</FilterLabel>
                  <FilterSelect>All<Chevron /></FilterSelect>
                </MapFilter>
              </MapCard>
              <AgentCard>
                <AgentName>AI Agent:</AgentName>
                <Bubble>
                  <Paragraph>Here's a summary of the urban anomaly detection report:</Paragraph>
                  <Findings>
                    <li><strong>Dominant Anomalies:</strong> Road damage is the most frequently reported anomaly (174 instances),<br />followed by graffiti (118 instances). Tent sightings are significantly less frequent (11 instances).</li>
                    <li><strong>Anomaly Hotspots:</strong> East 12th Street appears to be a concentrated area for anomalies, with both<br />"1545 East 12th Street" and "1901 East 12th Street" having 2 reports each. Other locations with<br />single reports are scattered across Turk Street and Golden Gate Avenue.</li>
                    <li><strong>Data Completeness:</strong> 10 reports are missing street address information, which impacts location-<br />based analysis.</li>
                    <li><strong>Temporal Scope:</strong> The reports span approximately 6 hours, from late evening (9:34 PM) on August<br />7th, 2025, to early morning (3:13 AM) on August 8th, 2025.</li>
                    <li><strong>Overall Reporting Volume:</strong> A total of 134 anomaly reports were filed during this period.</li>
                  </Findings>
                  <Paragraph>In conclusion, road damage and graffiti are the primary concerns, with a potential concentration</Paragraph>
                </Bubble>
                <AskRow>
                  <AskInput placeholder="Ask a question" />
                  <SendButton>Send</SendButton>
                </AskRow>
              </AgentCard>
            </TopRow>
            <Analytics>
              <Controls>
                <Field $w={103}><FieldLabel>Chart Type</FieldLabel><Control $w={75}>Bar<Chevron /></Control></Field>
                <Field $w={170}><FieldLabel>Anomaly Type</FieldLabel><Control $w={146}>graffiti<Chevron /></Control></Field>
                <Field $w={183}><FieldLabel>Start Date</FieldLabel><Control $w={159} $date>mm/dd/yyyy<CalendarGlyph /></Control></Field>
                <Field $w={159}><FieldLabel>End Date</FieldLabel><Control $w={159} $date>mm/dd/yyyy<CalendarGlyph /></Control></Field>
              </Controls>
              <Charts>
                <ChartCard $w={1702}>
                  <ChartTitle>Anomaly Detection Summary</ChartTitle>
                  <BarChart />
                </ChartCard>
                <ChartCard $w={869}>
                  <PieChart />
                </ChartCard>
              </Charts>
            </Analytics>
          </Main>
        </Body>
      </Page>
    </>
  );
}
